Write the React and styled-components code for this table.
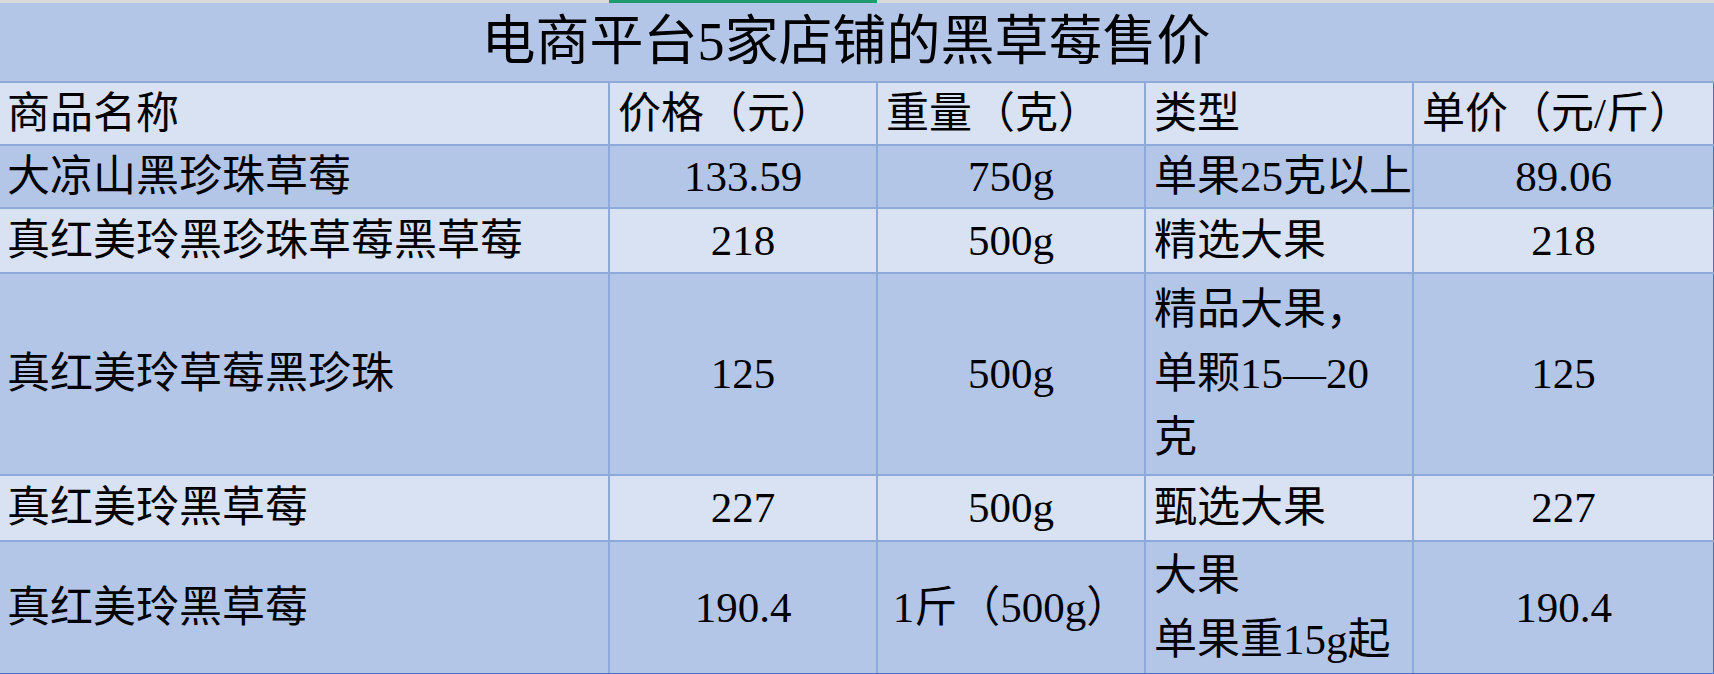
import React from "react";
import styled, { createGlobalStyle } from "styled-components";

const GlobalStyle = createGlobalStyle`
  html, body {
    margin: 0;
    padding: 0;
    background: #ffffff;
  }
  body {
    font-family: "Liberation Serif", "Noto Sans CJK SC", serif;
    color: #000;
  }
`;

const COLS = [609, 268, 268, 268, 301];

const Sheet = styled.div`
  width: 1714px;
  height: 674px;
  overflow: hidden;
`;

const HeaderStrip = styled.div`
  display: grid;
  grid-template-columns: ${COLS[0]}px ${COLS[1]}px 1fr;
  height: 3px;
  background: #d9d9d9;
`;

const Marker = styled.div`
  background: ${(p) => (p.$active ? "#1e9b6c" : "transparent")};
`;

const Table = styled.table`
  width: 1714px;
  table-layout: fixed;
  border-collapse: collapse;
  border-spacing: 0;
`;

const TitleCell = styled.td`
  height: 78px;
  padding: 0 22px 0 0;
  background: #b4c6e7;
  border-bottom: 2px solid #8eaadb;
  text-align: center;
  vertical-align: middle;
  font-size: 54px;
  line-height: 1;
  white-space: nowrap;
`;

const Row = styled.tr`
  background: ${(p) => (p.$tone === "light" ? "#d9e2f3" : "#b4c6e7")};
`;

const Cell = styled.td`
  height: ${(p) => p.$h}px;
  padding: 0 8px;
  border: 2px solid #8eaadb;
  font-size: 43px;
  line-height: 1.2;
  white-space: nowrap;
  overflow: visible;
  vertical-align: middle;
  text-align: ${(p) => (p.$center ? "center" : "left")};

  &:first-child {
    border-left: none;
    padding-left: 7px;
  }
  &:last-child {
    border-right: 2px solid #4472c4;
  }
  tr:last-child > & {
    border-bottom: 3px solid #4472c4;
  }
`;

const Lines = styled.div`
  line-height: ${(p) => (p.$multi ? "64px" : "1.2")};
`;

const headers = ["商品名称", "价格（元）", "重量（克）", "类型", "单价（元/斤）"];

const rows = [
  { name: "大凉山黑珍珠草莓", price: "133.59", weight: "750g", type: ["单果25克以上"], unit: "89.06", tone: "dark", h: 61 },
  { name: "真红美玲黑珍珠草莓黑草莓", price: "218", weight: "500g", type: ["精选大果"], unit: "218", tone: "light", h: 63 },
  { name: "真红美玲草莓黑珍珠", price: "125", weight: "500g", type: ["精品大果，", "单颗15—20", "克"], unit: "125", tone: "dark", h: 200 },
  { name: "真红美玲黑草莓", price: "227", weight: "500g", type: ["甄选大果"], unit: "227", tone: "light", h: 64 },
  { name: "真红美玲黑草莓", price: "190.4", weight: "1斤（500g）", type: ["大果", "单果重15g起"], unit: "190.4", tone: "dark", h: 131 },
];

export default function App() {
  return (
    <>
      <GlobalStyle />
      <Sheet>
        <HeaderStrip>
          <Marker />
          <Marker $active />
          <Marker />
        </HeaderStrip>
        <Table>
          <colgroup>
            {COLS.map((w, i) => (
              <col key={i} style={{ width: w }} />
            ))}
          </colgroup>
          <tbody>
            <tr>
              <TitleCell colSpan={5}>电商平台5家店铺的黑草莓售价</TitleCell>
            </tr>
            <Row $tone="light">
              {headers.map((h) => (
                <Cell key={h} $h={61}>
                  {h}
                </Cell>
              ))}
            </Row>
            {rows.map((r, i) => (
              <Row key={i} $tone={r.tone}>
                <Cell $h={r.h}>{r.name}</Cell>
                <Cell $h={r.h} $center>
                  {r.price}
                </Cell>
                <Cell $h={r.h} $center>
                  {r.weight}
                </Cell>
                <Cell $h={r.h}>
                  <Lines $multi={r.type.length > 1}>
                    {r.type.map((t, j) => (
                      <div key={j}>{t}</div>
                    ))}
                  </Lines>
                </Cell>
                <Cell $h={r.h} $center>
                  {r.unit}
                </Cell>
              </Row>
            ))}
          </tbody>
        </Table>
      </Sheet>
    </>
  );
}
